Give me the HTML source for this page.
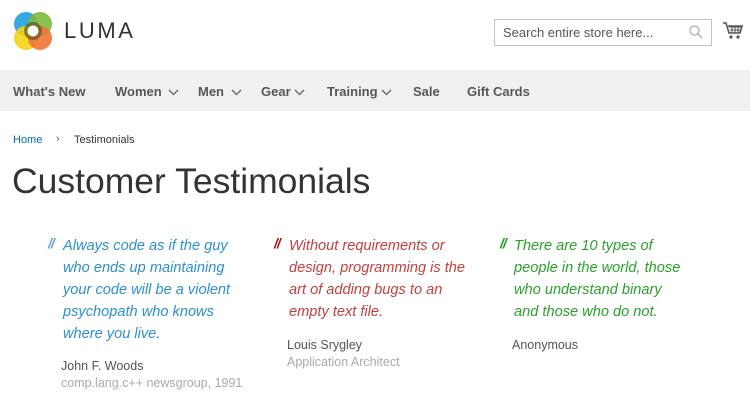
<!DOCTYPE html>
<html><head><style>
*{margin:0;padding:0;box-sizing:border-box}
body{width:750px;height:405px;overflow:hidden;background:#fff;font-family:"Liberation Sans",sans-serif;color:#333;position:relative}
.a{position:absolute;white-space:nowrap}
.nav{position:absolute;left:0;top:70px;width:750px;height:41px;background:#f0f0f0}
.nav span{position:absolute;top:14px;font-size:13px;font-weight:bold;color:#575757}
.nav svg{position:absolute;top:19px}
.q{position:absolute;font-style:italic;font-size:14.6px;line-height:22px;font-weight:300}
.mk{position:absolute;font-style:italic;font-weight:bold;font-size:14px;letter-spacing:-1px}
.n{position:absolute;font-size:12.5px;color:#555}
.r{position:absolute;font-size:12.5px;color:#aaa}
</style></head><body>
<svg class="a" style="left:13px;top:11px" width="40" height="40" viewBox="0 0 40 40">
<circle cx="13" cy="13" r="12" fill="#1fa0dd" opacity=".9"/>
<circle cx="27" cy="13" r="12" fill="#7dbb3f" opacity=".9"/>
<circle cx="13" cy="27" r="12" fill="#f5d316" opacity=".9"/>
<circle cx="27" cy="27" r="12" fill="#ef7436" opacity=".9"/>
<circle cx="20" cy="20" r="9" fill="#5a5a20" opacity=".7"/>
<circle cx="20" cy="20" r="5.5" fill="#fff"/>
</svg>
<div class="a" style="left:64px;top:18px;font-size:22px;letter-spacing:2.6px;color:#333">LUMA</div>
<div class="a" style="left:494px;top:19px;width:218px;height:27px;border:1px solid #c2c2c2;font-size:13px;color:#575757;padding:5px 8px">Search entire store here...</div>
<svg class="a" style="left:689px;top:25px" width="14" height="14" viewBox="0 0 14 14"><circle cx="5.5" cy="5.5" r="4.5" fill="none" stroke="#aaa" stroke-width="1.2"/><path d="M9 9l4 4" stroke="#aaa" stroke-width="1.3"/></svg>
<svg class="a" style="left:723px;top:22px" width="20" height="19" viewBox="0 0 20 19"><path d="M0 1h3l3 10h11l2-7H5" fill="none" stroke="#555" stroke-width="1.6"/><path d="M6 5h12M7 8h10M9 4v7M12 4v7M15 4v7" stroke="#555" stroke-width="1"/><circle cx="8" cy="15" r="1.6" fill="#555"/><circle cx="15" cy="15" r="1.6" fill="#555"/></svg>
<div class="nav">
<span style="left:13px">What's New</span>
<span style="left:115px">Women</span><svg style="left:168px" width="11" height="7" viewBox="0 0 11 7"><path d="M1 1l4.5 4.5L10 1" fill="none" stroke="#666" stroke-width="1.3"/></svg>
<span style="left:198px">Men</span><svg style="left:231px" width="11" height="7" viewBox="0 0 11 7"><path d="M1 1l4.5 4.5L10 1" fill="none" stroke="#666" stroke-width="1.3"/></svg>
<span style="left:261px">Gear</span><svg style="left:294px" width="11" height="7" viewBox="0 0 11 7"><path d="M1 1l4.5 4.5L10 1" fill="none" stroke="#666" stroke-width="1.3"/></svg>
<span style="left:327px">Training</span><svg style="left:381px" width="11" height="7" viewBox="0 0 11 7"><path d="M1 1l4.5 4.5L10 1" fill="none" stroke="#666" stroke-width="1.3"/></svg>
<span style="left:413px">Sale</span>
<span style="left:467px">Gift Cards</span>
</div>
<div class="a" style="left:13px;top:134px;font-size:11px;color:#006bb4">Home</div>
<div class="a" style="left:56px;top:133px;font-size:11px;color:#666">›</div>
<div class="a" style="left:74px;top:134px;font-size:11px;color:#333">Testimonials</div>
<div class="a" style="left:12px;top:161px;font-size:35.5px;font-weight:300;color:#333">Customer Testimonials</div>

<div class="mk" style="left:48px;top:235px;color:#6e9ec6">//</div>
<div class="q" style="left:63px;top:235px;color:#2d8fce">Always code as if the guy<br>who ends up maintaining<br>your code will be a violent<br>psychopath who knows<br>where you live.</div>
<div class="n" style="left:61px;top:359px">John F. Woods</div>
<div class="r" style="left:61px;top:376px">comp.lang.c++ newsgroup, 1991</div>

<div class="mk" style="left:274px;top:235px;color:#a21313">//</div>
<div class="q" style="left:289px;top:235px;color:#c2413e">Without requirements or<br>design, programming is the<br>art of adding bugs to an<br>empty text file.</div>
<div class="n" style="left:287px;top:338px">Louis Srygley</div>
<div class="r" style="left:287px;top:355px">Application Architect</div>

<div class="mk" style="left:500px;top:235px;color:#1a9b1a">//</div>
<div class="q" style="left:514px;top:235px;color:#2ba12b">There are 10 types of<br>people in the world, those<br>who understand binary<br>and those who do not.</div>
<div class="n" style="left:512px;top:338px">Anonymous</div>
</body></html>
